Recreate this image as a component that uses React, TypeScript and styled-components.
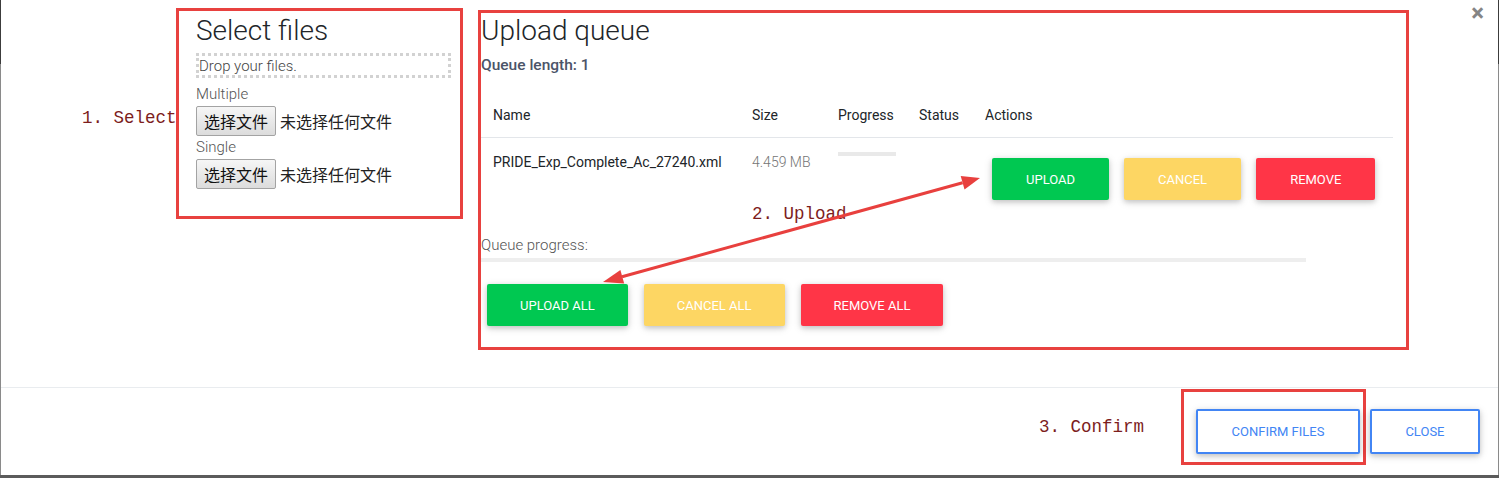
import React from "react";
import styled, { createGlobalStyle, css } from "styled-components";

const GlobalStyle = createGlobalStyle`
  html, body { margin: 0; padding: 0; background: #fff; }
  body { font-family: Roboto, "Noto Sans CJK SC", sans-serif; color: #212529; }
  * { box-sizing: border-box; }
`;

const Page = styled.div`
  width: 1502px;
  height: 478px;
  display: flex;
  flex-direction: column;
  overflow: hidden;
`;

const Modal = styled.div`
  position: relative;
  width: 1499px;
  height: 475px;
  background: #fff;
  border-style: solid;
  border-width: 0 1px;
  border-image: linear-gradient(to bottom, #3c3c3c 0, #3c3c3c 65px, #8a8a8a 65px, #8a8a8a 100%) 1;
  display: flex;
  flex-direction: column;
`;

const Backdrop = styled.div`
  width: 1499px;
  height: 3px;
  background: #5b5b5b;
`;

const Body = styled.div`
  height: 387px;
  display: flex;
  align-items: flex-start;
  padding: 8px 14px 0 81px;
`;

const Note = styled.div`
  font-family: "Liberation Mono", monospace;
  font-size: 17.5px;
  line-height: 20px;
  color: #7d1d1d;
  white-space: nowrap;
`;

const SelectNote = styled(Note)`
  width: 94px;
  flex-shrink: 0;
  margin-top: 100px;
`;

const UploadNote = styled(Note)`
  position: absolute;
  left: 271px;
  top: 191px;
`;

const ConfirmNote = styled(Note)`
  margin-right: 37px;
`;

const RedFrame = styled.div`
  border: 3px solid #e8413f;
  flex-shrink: 0;
`;

const SelectBox = styled(RedFrame)`
  width: 287px;
  height: 211px;
  padding: 4px 0 0 17px;
  display: flex;
  flex-direction: column;
  align-items: flex-start;
`;

const QueueBox = styled(RedFrame)`
  position: relative;
  width: 931px;
  height: 340px;
  margin: 2px 0 0 15px;
  padding: 2px 0 0 0;
`;

const Heading = styled.h4`
  margin: 0;
  font-family: "Roboto Light", Roboto, sans-serif;
  font-size: 28px;
  font-weight: 300;
  line-height: 32px;
  color: #212529;
`;

const DropZone = styled.div`
  margin-top: 6px;
  width: 255px;
  height: 25px;
  border: 3px dotted #d2d2d2;
  padding: 2px 0 0 0;
  font-family: "Roboto Light", Roboto, sans-serif;
  font-size: 15px;
  font-weight: 300;
  line-height: 17px;
  color: #444;
`;

const FieldLabel = styled.div<{ $mt: number }>`
  margin-top: ${(p) => p.$mt}px;
  font-family: "Roboto Light", Roboto, sans-serif;
  font-size: 15px;
  font-weight: 300;
  line-height: 21px;
  color: #555;
`;

const FileRow = styled.div`
  margin-top: 1px;
  display: flex;
  align-items: center;
  gap: 4px;
`;

const FileButton = styled.button`
  width: 80px;
  height: 30px;
  padding: 0;
  border: 1px solid #a3a3a3;
  border-radius: 2px;
  background: linear-gradient(#f6f6f6, #dcdcdc);
  font-family: "Noto Sans CJK SC", sans-serif;
  font-size: 16px;
  color: #111;
`;

const FileText = styled.span`
  font-family: "Noto Sans CJK SC", sans-serif;
  font-size: 16px;
  color: #222;
`;

const QueueLength = styled.div`
  margin-top: 8px;
  font-size: 15.5px;
  font-weight: 500;
  line-height: 20px;
  color: #4b5468;
`;

const Table = styled.div`
  margin-top: 18px;
  width: 912px;
`;

const Row = styled.div<{ $head?: boolean }>`
  display: grid;
  grid-template-columns: 259px 86px 81px 66px 420px;
  ${(p) =>
    p.$head &&
    css`
      border-bottom: 1px solid #e3e6ea;
    `}
`;

const Cell = styled.div<{ $head?: boolean; $muted?: boolean }>`
  padding: ${(p) => (p.$head ? "12px" : "14px 12px")};
  font-size: 14px;
  line-height: 20px;
  font-weight: ${(p) => (p.$muted ? 300 : 400)};
  color: ${(p) => (p.$muted ? "#757575" : "#212529")};
  white-space: nowrap;
`;

const MiniBar = styled.div`
  width: 58px;
  height: 4px;
  background: #e9e9e9;
`;

const ActionCell = styled.div`
  padding: 20px 12px 20px 19px;
  display: flex;
  gap: 15px;
`;

const tones = {
  green: "#00c851",
  yellow: "#fdd663",
  red: "#ff3547",
};

const ColorButton = styled.button<{ $tone: keyof typeof tones }>`
  height: 42px;
  padding: 0 33px;
  border: none;
  border-radius: 2px;
  background: ${(p) => tones[p.$tone]};
  color: #fff;
  font-family: Roboto, sans-serif;
  font-size: 13px;
  text-transform: uppercase;
  box-shadow: 0 2px 5px 0 rgba(0, 0, 0, 0.16), 0 2px 10px 0 rgba(0, 0, 0, 0.12);
`;

const RowButton = styled(ColorButton)`
  padding: 0 34px;
`;

const ProgressLabel = styled.div`
  margin-top: 15px;
  font-family: "Roboto Light", Roboto, sans-serif;
  font-size: 15px;
  font-weight: 300;
  line-height: 21px;
  color: #555;
`;

const QueueBar = styled.div`
  margin-top: 2px;
  width: 825px;
  height: 4px;
  background: #eeeeee;
`;

const BulkRow = styled.div`
  margin-top: 22px;
  padding-left: 6px;
  display: flex;
  gap: 16px;
`;

const Arrow = styled.svg`
  position: absolute;
  left: 0;
  top: 0;
  overflow: visible;
  pointer-events: none;
`;

const CloseX = styled.button`
  margin-left: auto;
  margin-top: -7px;
  padding: 0;
  border: none;
  background: transparent;
  font-family: Roboto, sans-serif;
  font-size: 24px;
  font-weight: 700;
  line-height: 1;
  color: #858585;
`;

const Footer = styled.div`
  flex: 1;
  display: flex;
  align-items: center;
  justify-content: flex-end;
  border-top: 1px solid #e9ecef;
  padding: 1px 18px 10px 0;
`;

const ConfirmFrame = styled(RedFrame)`
  padding: 17px 3px 8px 12px;
`;

const OutlineButton = styled.button`
  height: 45px;
  padding: 0 33.5px;
  border: 2px solid #4285f4;
  border-radius: 2px;
  background: #fff;
  color: #4285f4;
  font-family: Roboto, sans-serif;
  font-size: 13px;
  text-transform: uppercase;
  box-shadow: 0 2px 5px 0 rgba(0, 0, 0, 0.16), 0 2px 10px 0 rgba(0, 0, 0, 0.12);
`;

const CloseButton = styled(OutlineButton)`
  margin-left: 4px;
  align-self: flex-end;
  margin-bottom: 11px;
`;

function FileInput() {
  return (
    <FileRow>
      <FileButton>选择文件</FileButton>
      <FileText>未选择任何文件</FileText>
    </FileRow>
  );
}

export default function App() {
  const red = "#e8403e";
  return (
    <>
      <GlobalStyle />
      <Page>
        <Modal>
          <Body>
            <SelectNote>1. Select</SelectNote>
            <SelectBox>
              <Heading>Select files</Heading>
              <DropZone>Drop your files.</DropZone>
              <FieldLabel $mt={6}>Multiple</FieldLabel>
              <FileInput />
              <FieldLabel $mt={1}>Single</FieldLabel>
              <FileInput />
            </SelectBox>
            <QueueBox>
              <Heading>Upload queue</Heading>
              <QueueLength>Queue length: 1</QueueLength>
              <Table>
                <Row $head>
                  <Cell $head>Name</Cell>
                  <Cell $head>Size</Cell>
                  <Cell $head>Progress</Cell>
                  <Cell $head>Status</Cell>
                  <Cell $head>Actions</Cell>
                </Row>
                <Row>
                  <Cell>PRIDE_Exp_Complete_Ac_27240.xml</Cell>
                  <Cell $muted>4.459 MB</Cell>
                  <Cell>
                    <MiniBar />
                  </Cell>
                  <Cell />
                  <ActionCell>
                    <RowButton $tone="green">Upload</RowButton>
                    <RowButton $tone="yellow">Cancel</RowButton>
                    <RowButton $tone="red">Remove</RowButton>
                  </ActionCell>
                </Row>
              </Table>
              <ProgressLabel>Queue progress:</ProgressLabel>
              <QueueBar />
              <BulkRow>
                <ColorButton $tone="green">Upload all</ColorButton>
                <ColorButton $tone="yellow">Cancel all</ColorButton>
                <ColorButton $tone="red">Remove all</ColorButton>
              </BulkRow>
              <UploadNote>2. Upload</UploadNote>
              <Arrow width="931" height="340" viewBox="0 0 931 340">
                <line x1="141" y1="263.7" x2="481.6" y2="169.8" stroke={red} strokeWidth="3" />
                <polygon points="499,165 483.5,176.5 479.7,163.1" fill={red} />
                <polygon points="122,269 143.2,270.4 139.4,257" fill={red} />
              </Arrow>
            </QueueBox>
            <CloseX aria-label="Close">×</CloseX>
          </Body>
          <Footer>
            <ConfirmNote>3. Confirm</ConfirmNote>
            <ConfirmFrame>
              <OutlineButton>Confirm files</OutlineButton>
            </ConfirmFrame>
            <CloseButton>Close</CloseButton>
          </Footer>
        </Modal>
        <Backdrop />
      </Page>
    </>
  );
}
